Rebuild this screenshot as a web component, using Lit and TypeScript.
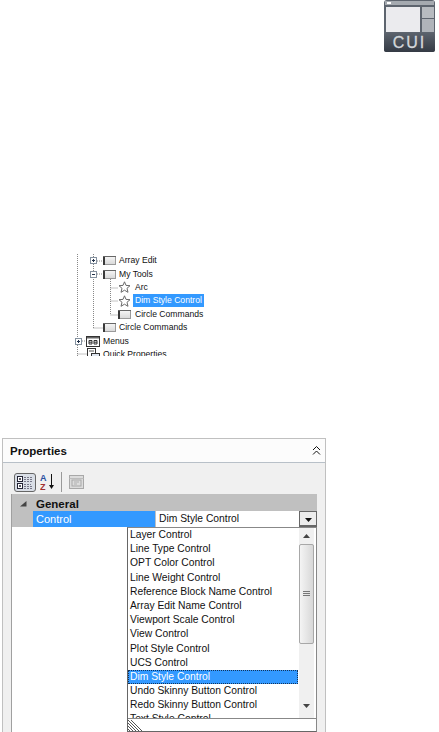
import { LitElement, html, css, svg } from "lit";
import { customElement } from "lit/decorators.js";

const FONT = css`"Liberation Sans", Arial, sans-serif`;

type Row = { x: number; box?: "+" | "-"; boxGap?: number; icon: "bar" | "star" | "menu" | "qp"; gap: number; label: string; sel?: boolean };
const rows: Row[] = [
  { x: 27, box: "+", boxGap: 6, icon: "bar", gap: 1, label: "Array Edit" },
  { x: 27, box: "-", boxGap: 6, icon: "bar", gap: 1, label: "My Tools" },
  { x: 55, icon: "star", gap: 2, label: "Arc" },
  { x: 55, icon: "star", gap: 2, label: "Dim Style Control", sel: true },
  { x: 55, icon: "bar", gap: 2, label: "Circle Commands" },
  { x: 40, icon: "bar", gap: 1, label: "Circle Commands" },
  { x: 12, box: "+", boxGap: 4, icon: "menu", gap: 1, label: "Menus" },
  { x: 24, icon: "qp", gap: 1, label: "Quick Properties" },
];

const options = [
  "Layer Control", "Line Type Control", "OPT Color Control", "Line Weight Control",
  "Reference Block Name Control", "Array Edit Name Control", "Viewport Scale Control",
  "View Control", "Plot Style Control", "UCS Control", "Dim Style Control",
  "Undo Skinny Button Control", "Redo Skinny Button Control", "Text Style Control",
];

const icons = {
  bar: svg`<svg width="13" height="9" viewBox="0 0 13 9"><defs><linearGradient id="b" x1="0" y1="0" x2="0" y2="1"><stop offset="0" stop-color="#f6f6f6"/><stop offset="1" stop-color="#d8d8d8"/></linearGradient></defs><rect x=".5" y=".5" width="12" height="8" fill="url(#b)" stroke="#9a9a9a"/><rect x="0" y="0" width="2" height="9" fill="#3a3a3a"/><rect x="0" y="0" width="13" height="1" fill="#666"/></svg>`,
  star: svg`<svg width="13" height="12" viewBox="0 0 13 12"><path d="M6.5.8 8 4.4 12 4.7 9 7.3 10 11.3 6.5 9.2 3 11.3 4 7.3 1 4.7 5 4.4Z" fill="#fff" stroke="#6a6a6a"/></svg>`,
  menu: svg`<svg width="14" height="11" viewBox="0 0 14 11"><rect x=".5" y=".5" width="13" height="10" fill="#fff" stroke="#333"/><rect x="1" y="1" width="12" height="1.5" fill="#666"/><path d="M3 4.5h3v3.5H3zM8 4.5h3v3.5H8zM3 6.2h3M8 6.2h3" fill="none" stroke="#333"/></svg>`,
  qp: svg`<svg width="13" height="13" viewBox="0 0 13 13"><rect x=".5" y=".5" width="8" height="11" fill="#fff" stroke="#333"/><path d="M2 3h5" stroke="#555"/><rect x="4.5" y="5.5" width="8" height="7" fill="#dfe6f0" stroke="#333"/></svg>`,
};

@customElement("app-root")
export class AppRoot extends LitElement {
  static styles = css`
    :host { display: block; width: 439px; height: 732px; overflow: hidden; background: #fff; font-family: ${FONT}; font-size: 10.3px; color: #111; }
    .page { display: flex; flex-direction: column; height: 732px; }
    .top { display: flex; justify-content: flex-end; padding-right: 4px; height: 53px; flex: none; }
    .tree { position: relative; margin: 201px 0 0 63px; width: 160px; height: 102px; overflow: hidden; flex: none; font-size: 8.6px; }
    .lines { position: absolute; left: 0; top: 0; }
    .row { position: relative; height: 13.4px; display: flex; align-items: center; white-space: nowrap; }
    .box { width: 7px; height: 7px; box-sizing: border-box; border: 1px solid #84919f; background: #fff; flex: none; position: relative; }
    .box i { position: absolute; background: #23324a; left: 1px; top: 2px; width: 3px; height: 1px; }
    .box i.v { left: 2px; top: 1px; width: 1px; height: 3px; }
    .row svg { flex: none; display: block; }
    .lbl { padding: 0 2px; line-height: 13px; }
    .lbl.sel { background: #3399ff; color: #fff; }
    .panel { margin: 82px 0 0 2px; width: 324px; flex: 1; min-height: 0; background: #f0f0f0; border: 1px solid #c0c0c0; border-bottom: 0; box-sizing: border-box; display: flex; flex-direction: column; }
    .head { height: 23px; flex: none; background: #fcfcfc; border-bottom: 1px solid #b8c0c8; display: flex; align-items: center; justify-content: space-between; padding: 0 3px 0 7px; font-weight: bold; font-size: 11.5px; }
    .tools { height: 31px; flex: none; display: flex; align-items: center; padding: 7px 0 0 11px; box-sizing: border-box; }
    .tbtn { width: 22px; height: 19px; border: 1px solid #666; border-radius: 3px; background: #d9dee6; box-sizing: border-box; display: flex; align-items: center; justify-content: center; margin-right: 4px; }
    .sep { width: 1px; height: 20px; background: #999; margin: 0 7px 0 4px; }
    .grid { flex: 1; margin: 0 8px; min-height: 0; border-left: 1px solid #a0a0a0; background: #fff; display: flex; flex-direction: column; }
    .cat { height: 17px; flex: none; background: #c0c0c0; display: flex; align-items: center; font-weight: bold; font-size: 11.5px; padding: 2px 0 0 8px; box-sizing: border-box; gap: 9px; }
    .prop { height: 16px; flex: none; display: flex; background: #c0c0c0; }
    .pname { width: 122px; margin-left: 21px; background: #3399ff; color: #fff; line-height: 16px; padding-left: 3px; box-sizing: border-box; font-size: 11px; }
    .pval { flex: 1; background: #fff; margin-left: 1px; line-height: 16px; padding-left: 3px; }
    .ddb { width: 18px; background: #ececec; border: 1px solid #666; border-bottom-width: 2px; box-sizing: border-box; display: flex; align-items: center; justify-content: center; padding-top: 2px; }
    .under { flex: 1; min-height: 0; display: flex; justify-content: flex-end; }
    .drop { width: 190px; border: 1px solid #666; border-right-color: #888; border-top-color: #888; box-sizing: border-box; background: #fff; display: flex; flex-direction: column; min-height: 0; }
    .listwrap { height: 190px; flex: none; display: flex; overflow: hidden; }
    .list { flex: 1; min-width: 0; }
    .opt { height: 14.2px; line-height: 14.2px; padding-left: 2px; white-space: nowrap; margin-right: 1px; }
    .opt.sel { background: #3399ff; color: #fff; outline: 1px dotted #12335a; outline-offset: -1px; }
    .sb { width: 15px; margin-right: 2px; flex: none; background: #f0f0f0; display: flex; flex-direction: column; align-items: center; }
    .arrow { height: 16px; flex: none; display: flex; align-items: center; justify-content: center; }
    .arrow.dn { padding-bottom: 4px; }
    .thumb { width: 15px; height: 100px; box-sizing: border-box; border: 1px solid #a8a8a8; border-radius: 2px; background: linear-gradient(90deg, #f4f4f4, #d8d8d8); display: flex; align-items: center; justify-content: center; flex: none; }
    .fill { flex: 1; }
    .foot { border-top: 1px solid #888; flex: 1; min-height: 0; background: #fff; overflow: hidden; }
  `;

  render() {
    return html`<div class="page">
      <div class="top">
        <svg width="51" height="53" viewBox="0 0 51 53">
          <defs><linearGradient id="g" x1="0" y1="0" x2="0" y2="1"><stop offset="0" stop-color="#5b626c"/><stop offset="1" stop-color="#343a44"/></linearGradient></defs>
          <rect x="0" y="0" width="51" height="52" rx="3" fill="#5d646e"/>
          <rect x="1" y="1" width="49" height="4" fill="#a5aab0"/>
          <rect x="3" y="2" width="4" height="2" fill="#fff"/>
          <rect x="2" y="7" width="34" height="25" fill="#ebebee"/>
          <rect x="38" y="7" width="12" height="11" fill="#b7bbc0"/>
          <rect x="38" y="19" width="12" height="13" fill="#b0b4ba"/>
          <rect x="0" y="33" width="51" height="19" rx="2" fill="url(#g)"/>
          <text x="25.5" y="48" text-anchor="middle" font-family="Liberation Sans" font-size="16" letter-spacing="2" fill="#d4d7da" stroke="#d4d7da" stroke-width=".3">CUI</text>
        </svg>
      </div>
      <div class="tree">
        <svg class="lines" width="70" height="102" fill="none" stroke="#888" stroke-dasharray="1 1">
          <path d="M14.5 0V84M14.5 91V102M30.5 0V4M30.5 10V17M30.5 23V74M30.5 74H40M47.5 25V61M47.5 34H55M47.5 47H55M47.5 61H55M34 7H40M34 20H40M19 87H23M14.5 100H24"/>
        </svg>
        ${rows.map(
          (r) => html`<div class="row" style="padding-left:${r.x}px">
            ${r.box ? html`<span class="box" style="margin-right:${r.boxGap}px"><i></i>${r.box === "+" ? html`<i class="v"></i>` : ""}</span>` : ""}
            ${icons[r.icon]}
            <span class="lbl ${r.sel ? "sel" : ""}" style="margin-left:${r.gap}px">${r.label}</span>
          </div>`
        )}
      </div>
      <div class="panel">
        <div class="head">
          <span>Properties</span>
          <svg width="11" height="11" viewBox="0 0 11 11" fill="none" stroke="#111"><path d="M2 5 5.5 1.5 9 5M2 9.5 5.5 6 9 9.5"/></svg>
        </div>
        <div class="tools">
          <span class="tbtn"><svg width="17" height="15" viewBox="0 0 17 15"><rect x=".5" y="1.5" width="5" height="5" fill="#fff" stroke="#223"/><rect x=".5" y="8.5" width="5" height="5" fill="#fff" stroke="#223"/><path d="M2 4h2M3 3v2M2 11h2M3 10v2" stroke="#223"/><path d="M7 2.5h9M7 4.5h9M7 6.5h9M7 9.5h7M7 11.5h9M7 13.5h9" stroke="#778" stroke-dasharray="2 1"/></svg></span>
          <svg width="17" height="18" viewBox="0 0 17 18">
            <text x="0" y="8" font-size="9" font-family="Liberation Sans" font-weight="bold" fill="#2a4fa0">A</text>
            <text x="0" y="17" font-size="9" font-family="Liberation Sans" font-weight="bold" fill="#a03030">Z</text>
            <path d="M11.5 1V14" stroke="#111"/><path d="M9 12h5l-2.5 4z" fill="#111"/>
          </svg>
          <span class="sep"></span>
          <svg width="15" height="14" viewBox="0 0 15 14"><rect x=".5" y=".5" width="14" height="13" fill="#dcdcdc" stroke="#a8a8a8"/><path d="M.5 3.5h14" stroke="#bcbcbc"/><rect x="3" y="5" width="9" height="6" fill="none" stroke="#a8a8a8"/><path d="M5 7h5M5 9h3" stroke="#b0b0b0"/></svg>
        </div>
        <div class="grid">
          <div class="cat">
            <svg width="7" height="6" viewBox="0 0 7 6"><path d="M0 5.5H6.5V0Z" fill="#444"/></svg>
            <span>General</span>
          </div>
          <div class="prop">
            <span class="pname">Control</span>
            <span class="pval">Dim Style Control</span>
            <span class="ddb"><svg width="7" height="4" viewBox="0 0 7 4"><path d="M0 0H7L3.5 4Z" fill="#111"/></svg></span>
          </div>
          <div class="under">
            <div class="drop">
              <div class="listwrap">
                <div class="list">
                  ${options.map((o) => html`<div class="opt ${o === "Dim Style Control" ? "sel" : ""}">${o}</div>`)}
                </div>
                <div class="sb">
                  <div class="arrow"><svg width="7" height="4" viewBox="0 0 7 4"><path d="M3.5 0 7 4H0Z" fill="#444"/></svg></div>
                  <div class="thumb"><svg width="7" height="6" viewBox="0 0 7 6" stroke="#777"><path d="M0 .5h7M0 2.5h7M0 4.5h7"/></svg></div>
                  <div class="fill"></div>
                  <div class="arrow dn"><svg width="7" height="4" viewBox="0 0 7 4"><path d="M0 0H7L3.5 4Z" fill="#444"/></svg></div>
                </div>
              </div>
              <div class="foot">
                <svg width="16" height="14" viewBox="0 0 16 14" stroke="#555"><path d="M0 1 13 14M0 4 10 14M0 7 7 14M0 10 4 14M3 1 16 14"/></svg>
              </div>
            </div>
          </div>
        </div>
      </div>
    </div>`;
  }
}
